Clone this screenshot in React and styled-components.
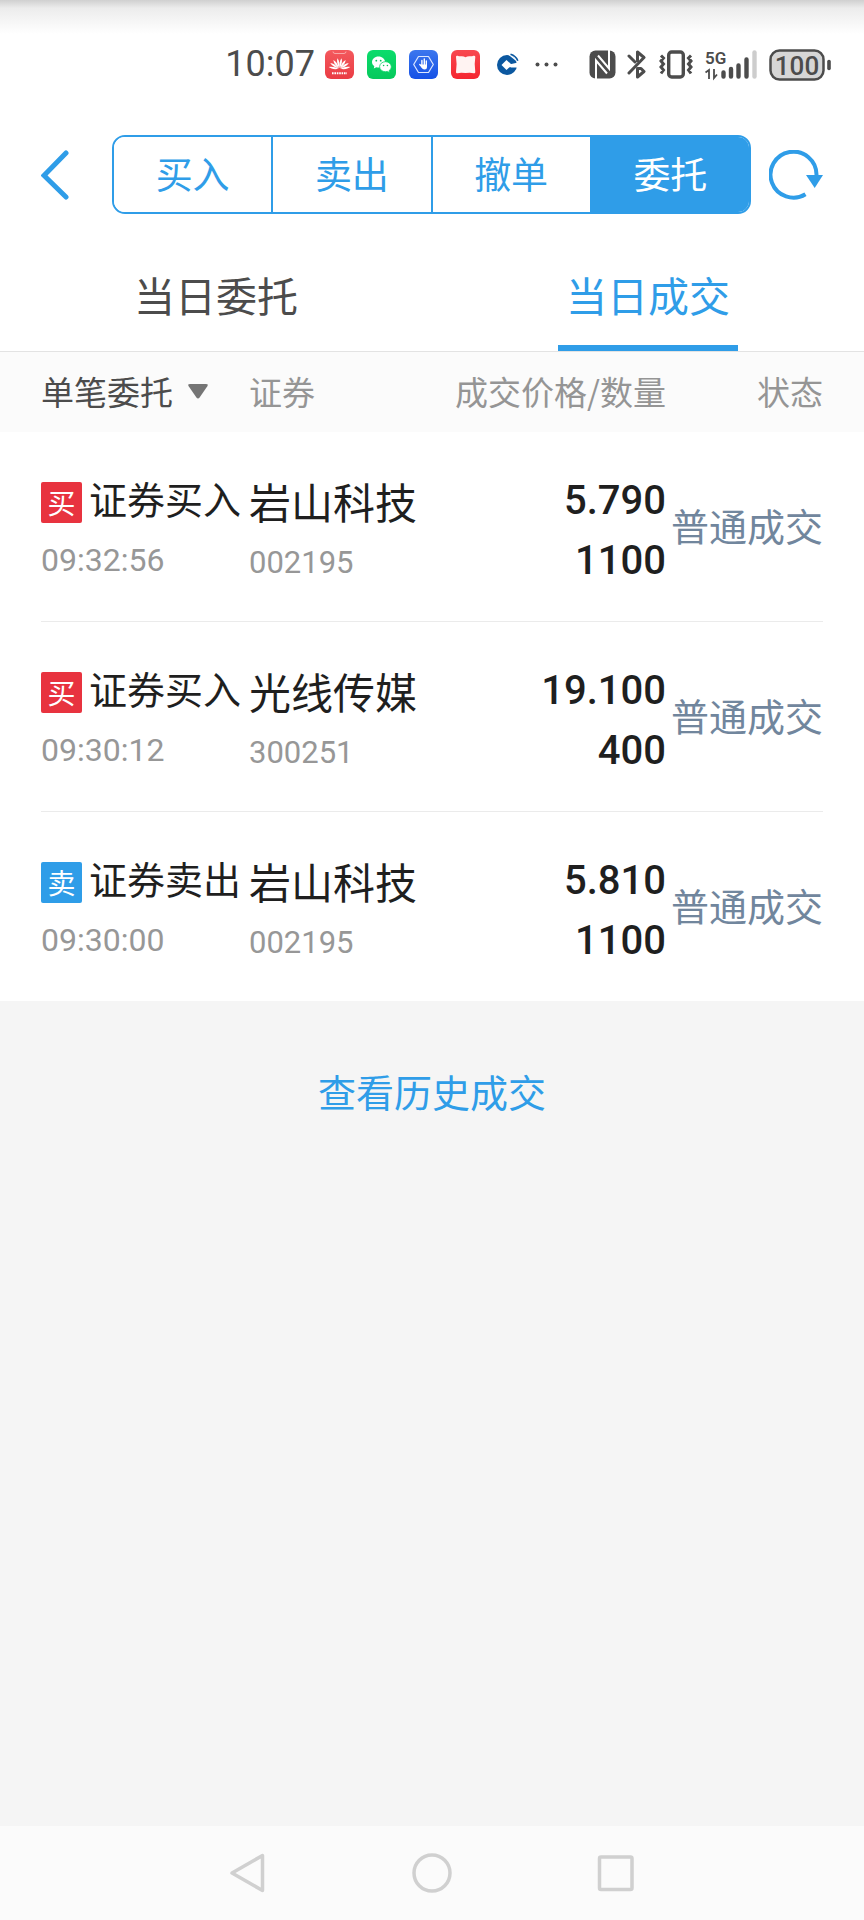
import React from "react";
import styled, { createGlobalStyle } from "styled-components";

const blue = "#2f9de8";
const ink = "#4c4c4c";
const cjk = '"Noto Sans CJK SC", sans-serif';
const digits = 'Roboto, "Noto Sans CJK SC", sans-serif';

const GlobalStyle = createGlobalStyle`
  *, *::before, *::after { box-sizing: border-box; }
  body { margin: 0; background: #f5f5f5; font-family: ${cjk}; color: #1f1f1f; }
  button, select { font: inherit; color: inherit; background: none; border: 0; padding: 0; margin: 0; cursor: pointer; }
  svg { display: block; flex: none; }
`;

const Screen = styled.div`
  display: flex;
  flex-direction: column;
  min-height: 100vh;
`;

const StatusBar = styled.header`
  display: flex;
  justify-content: flex-end;
  gap: 31px;
  height: 135px;
  padding: 46px 33px 0 16px;
  background: linear-gradient(#d0d0d0, #ececec 8px, #fff 34px);
  color: ${ink};
`;

const StatusGroup = styled.div`
  display: flex;
  align-items: center;
  height: 37px;
  gap: ${(p) => p.$gap}px;
`;

const Clock = styled.time`
  margin-right: -3px;
  font-family: ${digits};
  font-size: 36px;
  line-height: 37px;
`;

const Toolbar = styled.nav`
  display: flex;
  align-items: center;
  padding: 0 41px;
  background: #fff;
`;

const BackButton = styled.button`
  width: 71px;
  flex: none;
`;

const Segments = styled.div`
  display: flex;
  flex: 1;
  height: 79px;
  margin-right: 18px;
  border: 2px solid ${blue};
  border-radius: 13px;
  overflow: hidden;
`;

const Segment = styled.button`
  flex: 1;
  padding-bottom: 4px;
  font-size: 37px;
  line-height: 48px;
  color: ${(p) => (p.$active ? "#fff" : blue)};
  background: ${(p) => (p.$active ? blue : "#fff")};
  & + & { border-left: 2px solid ${blue}; }
`;

const Tabs = styled.div`
  display: flex;
  height: 138px;
  background: #fff;
  border-bottom: 1px solid #e3e3e3;
`;

const TabSlot = styled.div`
  flex: 1;
  display: flex;
  justify-content: center;
`;

const Tab = styled.button`
  width: 180px;
  padding-top: 28px;
  font-size: 41px;
  line-height: 56px;
  white-space: nowrap;
  color: ${(p) => (p.$active ? blue : ink)};
  border-bottom: 6px solid ${(p) => (p.$active ? blue : "transparent")};
`;

const Trades = styled.table`
  display: block;
  background: #fff;
`;

const Head = styled.thead`
  display: block;
  padding: 0 41px;
  background: #fbfbfb;
`;

const Body = styled.tbody`
  display: block;
  margin: 0 41px;
`;

const Row = styled.tr`
  display: grid;
  grid-template-columns: 208px minmax(0, 1fr) 215px 157px;
  white-space: nowrap;
`;

const HeadRow = styled(Row)`
  height: 80px;
  padding-bottom: 2px;
  align-items: center;
`;

const TradeRow = styled(Row)`
  height: 190px;
  align-items: center;
  border-bottom: 1px solid #ebebeb;
  &:last-child { height: 189px; border-bottom: 0; }
`;

const HeadCell = styled.th`
  padding: 0;
  font-size: 33px;
  line-height: 48px;
  font-weight: 400;
  color: #959595;
  text-align: ${(p) => p.$align || "left"};
`;

const Filter = styled.label`
  display: flex;
  align-items: center;
  gap: 14px;
  color: ${ink};
`;

const FilterSelect = styled.select`
  appearance: none;
  width: 132px;
  line-height: 48px;
`;

const Cell = styled.td`
  display: flex;
  flex-direction: column;
  gap: 2px;
  padding: 0;
`;

const OrderCell = styled(Cell)`
  padding-top: 5px;
`;

const StockCell = styled(Cell)`
  padding-top: 10px;
`;

const FigureCell = styled(Cell)`
  gap: 0;
  padding-top: 8px;
  text-align: right;
`;

const StateCell = styled(Cell)`
  padding-bottom: 4px;
  text-align: right;
  font-size: 38px;
  line-height: 60px;
  color: #71869d;
`;

const Side = styled.div`
  display: flex;
  align-items: center;
  gap: 7px;
  font-size: 38px;
  line-height: 60px;
`;

const Badge = styled.span`
  width: 41px;
  height: 41px;
  margin-top: 8px;
  border-radius: 2px;
  font-size: 28px;
  line-height: 41px;
  text-align: center;
  color: #fff;
  background: ${(p) => (p.$sell ? blue : "#e8333f")};
`;

const StockName = styled.div`
  font-size: 42px;
  line-height: 60px;
`;

const Time = styled.time`
  font-family: ${digits};
  font-size: 32px;
  line-height: 60px;
  color: #979797;
`;

const Code = styled.div`
  font-family: ${digits};
  font-size: 31px;
  line-height: 60px;
  color: #979797;
`;

const Figure = styled.div`
  font-family: ${digits};
  font-size: 40px;
  line-height: 60px;
  font-weight: 500;
`;

const More = styled.main`
  flex: 1;
  padding-top: 62px;
  text-align: center;
`;

const HistoryLink = styled.a`
  font-size: 38px;
  line-height: 56px;
  color: ${blue};
  text-decoration: none;
`;

const SystemNav = styled.footer`
  display: flex;
  align-items: center;
  justify-content: center;
  gap: 144px;
  height: 94px;
  background: #fbfbfb;
`;

const AppTile = ({ from, to, children }) => {
  const id = `tile${from.slice(1)}`;
  return (
    <svg width="29" height="29" viewBox="0 0 29 29" aria-hidden="true">
      <linearGradient id={id} x2="0" y2="1">
        <stop stopColor={from} />
        <stop offset="1" stopColor={to} />
      </linearGradient>
      <rect width="29" height="29" rx="6" fill={`url(#${id})`} />
      {children}
    </svg>
  );
};

const HuaweiIcon = () => (
  <AppTile from="#f4595d" to="#ea3c44">
    <path d="M8 1.500q0 2 2 2h9q2 0 2-2" fill="none" stroke="#f9a5a6" strokeWidth="1" />
    <g fill="#fff">
      {[-80, -57, -34, -11, 11, 34, 57, 80].map((a) => (
        <path key={a} d="M14.500 18C13 14 13.200 10.500 14.500 8C15.800 10.500 16 14 14.500 18Z" transform={`rotate(${a} 14.500 19)`} />
      ))}
    </g>
    <path d="M7 23.300h15" stroke="#fff" strokeWidth="2" strokeDasharray="1.600 .8" />
  </AppTile>
);

const WechatIcon = () => (
  <AppTile from="#0bdc6c" to="#06c95c">
    <path d="M11.500 6.500C7.700 6.500 5 9 5 12c0 1.800.9 3.200 2.300 4.200L6.800 18.500l2.500-1.300c.7.200 1.500.3 2.200.3 3.700 0 6.600-2.500 6.600-5.500s-2.900-5.500-6.600-5.500Z" fill="#fff" />
    <path d="M18.500 11.700c-3.300 0-5.900 2.200-5.900 5s2.600 5 5.900 5c.7 0 1.300-.1 1.900-.3l2.200 1.200-.5-2c1.400-.9 2.200-2.300 2.200-3.900 0-2.800-2.600-5-5.800-5Z" fill="#fff" stroke="#09d365" strokeWidth=".8" />
    <g fill="#09c35c"><circle cx="9.300" cy="10.700" r=".9" /><circle cx="13.700" cy="10.700" r=".9" /><circle cx="16.600" cy="15.500" r=".8" /><circle cx="20.400" cy="15.500" r=".8" /></g>
  </AppTile>
);

const GuardIcon = () => (
  <AppTile from="#3c77ee" to="#1551e6">
    <path d="M9.500 6.500h10l4.800 8-4.800 8h-10l-4.800-8Z" fill="none" stroke="#dce7ff" strokeWidth="1.200" strokeLinejoin="round" />
    <path d="M12.900 10.500v5M15.300 9v7M17.300 11v5M10.800 14.500l2.300 2.500" stroke="#fff" strokeWidth="1.400" strokeLinecap="round" />
    <path d="M12.200 14.500h5.800v2.500q0 2.500-2.600 2.500-1.800 0-3.200-2.500Z" fill="#fff" />
  </AppTile>
);

const ReaderIcon = () => (
  <AppTile from="#f8484f" to="#f52630">
    <path d="M5 7q0-1.600 1.600-1.200 1.400.6 3.500.5 2.500-.2 4.400.9 1.900-1.100 4.400-.9 2.100.1 3.500-.5Q24.300 5.400 24.300 7l-.6 7 .6 8q0 1.500-1.500 1.200-2.300-.6-8.300-.2-6-.4-8.100.2Q5 23.500 5 22l.6-8Z" fill="#fff3f2" />
  </AppTile>
);

const BankIcon = () => (
  <svg width="29" height="29" viewBox="0 0 29 29" aria-hidden="true">
    <circle cx="14" cy="15" r="10" fill="#0b58a0" />
    <path d="M14 15 25 12.500V17.500H18Z" fill="#fff" />
    <path d="M13.500 10 19 15l-5.500 5-5-5Z" fill="#fff" />
    <path d="M16 4.500 25.500 12" stroke="#fff" strokeWidth="1.200" />
    <path d="M17.500 4.300q5.500 1.700 7.300 6.500" fill="none" stroke="#0b58a0" strokeWidth="1.600" />
  </svg>
);

const MoreDots = () => (
  <svg width="23" height="29" viewBox="0 0 23 29" fill={ink} aria-hidden="true">
    <circle cx="2.500" cy="14.500" r="2" /><circle cx="11.500" cy="14.500" r="2" /><circle cx="20.500" cy="14.500" r="2" />
  </svg>
);

const NfcIcon = () => (
  <svg width="27" height="29" viewBox="0 0 27 29" aria-hidden="true">
    <rect x=".5" y=".5" width="26" height="28" rx="6" fill={ink} />
    <path d="M7 29V10.500L18 23.500" fill="none" stroke="#fff" strokeWidth="2" />
    <path d="M20 0V18.500L9 5.500" fill="none" stroke="#fff" strokeWidth="2" />
  </svg>
);

const BluetoothIcon = () => (
  <svg width="20" height="29" viewBox="0 0 20 29" fill="none" stroke={ink} strokeWidth="3" strokeLinejoin="round" strokeLinecap="round" aria-hidden="true">
    <path d="M2 23 17 7.500 10.500 2v8.500M2 6l6 6M10.500 18.500 14 18.500 17 21.500 10.500 27Z" />
  </svg>
);

const VibrateIcon = () => (
  <svg width="36" height="29" viewBox="0 0 36 29" fill="none" stroke={ink} aria-hidden="true">
    <rect x="10.700" y="2" width="14.600" height="25" rx="3" strokeWidth="3.400" />
    <path d="M3 5.500 5.500 8 3 11l2.500 3L3 17l2.500 3L3 23.500M33 5.500 30.500 8l2.500 3-2.500 3 2.500 3-2.500 3 2.500 3.500" strokeWidth="3" />
  </svg>
);

const SignalIcon = () => (
  <svg width="53" height="38" viewBox="0 -4 53 38" aria-hidden="true">
    <text x="0" y="14" fontFamily="Roboto, sans-serif" fontSize="17" fontWeight="600" fill={ink}>5G</text>
    <path d="M.5 22.500 4 20v9M9 19v9l3-3.500" fill="none" stroke={ink} strokeWidth="1.800" />
    <g stroke={ink} strokeWidth="4.400" strokeLinecap="round">
      <path d="M18.500 22.500V26.500M26 19V26.500M33.500 15.500V26.500M41.500 9.500V26.500" />
      <path d="M49.500 2.500V26.500" stroke="#cdcdcd" />
    </g>
  </svg>
);

const BatteryIcon = () => (
  <svg width="62" height="32" viewBox="0 0 62 32" role="img" aria-label="100%">
    <rect x="1.500" y="1.500" width="53" height="29" rx="9" fill="#d6d6d6" stroke={ink} strokeWidth="2.500" />
    <path d="M60 12.500v7" stroke={ink} strokeWidth="3.600" strokeLinecap="round" />
    <text x="28" y="25.500" textAnchor="middle" fontFamily="Roboto, sans-serif" fontSize="26" fontWeight="500" fill={ink}>100</text>
  </svg>
);

const BackIcon = () => (
  <svg width="28" height="50" viewBox="0 0 28 50" fill="none" aria-hidden="true">
    <path d="M25 3 3 25.500 25 47" stroke={blue} strokeWidth="5" strokeLinecap="round" />
  </svg>
);

const RefreshIcon = () => (
  <svg width="54" height="50" viewBox="0 0 54 50" aria-hidden="true">
    <path d="M36.500 44.300A23 23 0 1 1 47.500 25" fill="none" stroke={blue} strokeWidth="4" />
    <path d="M37 25h17L45.700 38Z" fill={blue} />
  </svg>
);

const Caret = () => (
  <svg width="22" height="17" viewBox="0 0 22 17" aria-hidden="true">
    <path d="M3 1h16q2.800 0 1.300 2.300L12.600 14.500q-1.600 2-3.200 0L1.700 3.300Q.2 1 3 1Z" fill="#757575" />
  </svg>
);

const segments = ["买入", "卖出", "撤单", "委托"];
const trades = [
  { side: "买", action: "证券买入", time: "09:32:56", name: "岩山科技", code: "002195", price: "5.790", amount: "1100" },
  { side: "买", action: "证券买入", time: "09:30:12", name: "光线传媒", code: "300251", price: "19.100", amount: "400" },
  { side: "卖", action: "证券卖出", time: "09:30:00", name: "岩山科技", code: "002195", price: "5.810", amount: "1100" },
];

export default function App() {
  return (
    <Screen>
      <GlobalStyle />
      <StatusBar>
        <StatusGroup $gap={13}>
          <Clock>10:07</Clock>
          <HuaweiIcon />
          <WechatIcon />
          <GuardIcon />
          <ReaderIcon />
          <BankIcon />
          <MoreDots />
        </StatusGroup>
        <StatusGroup $gap={11}>
          <NfcIcon />
          <BluetoothIcon />
          <VibrateIcon />
          <SignalIcon />
          <BatteryIcon />
        </StatusGroup>
      </StatusBar>
      <Toolbar>
        <BackButton aria-label="返回"><BackIcon /></BackButton>
        <Segments>
          {segments.map((s) => (
            <Segment key={s} $active={s === "委托"}>{s}</Segment>
          ))}
        </Segments>
        <button aria-label="刷新"><RefreshIcon /></button>
      </Toolbar>
      <Tabs>
        <TabSlot><Tab>当日委托</Tab></TabSlot>
        <TabSlot><Tab $active>当日成交</Tab></TabSlot>
      </Tabs>
      <Trades>
        <Head>
          <HeadRow>
            <HeadCell>
              <Filter>
                <FilterSelect aria-label="委托类型"><option>单笔委托</option></FilterSelect>
                <Caret />
              </Filter>
            </HeadCell>
            <HeadCell>证券</HeadCell>
            <HeadCell $align="right">成交价格/数量</HeadCell>
            <HeadCell $align="right">状态</HeadCell>
          </HeadRow>
        </Head>
        <Body>
          {trades.map((t) => (
            <TradeRow key={t.time}>
              <OrderCell>
                <Side><Badge $sell={t.side === "卖"}>{t.side}</Badge>{t.action}</Side>
                <Time>{t.time}</Time>
              </OrderCell>
              <StockCell>
                <StockName>{t.name}</StockName>
                <Code>{t.code}</Code>
              </StockCell>
              <FigureCell>
                <Figure>{t.price}</Figure>
                <Figure>{t.amount}</Figure>
              </FigureCell>
              <StateCell>普通成交</StateCell>
            </TradeRow>
          ))}
        </Body>
      </Trades>
      <More>
        <HistoryLink href="#history">查看历史成交</HistoryLink>
      </More>
      <SystemNav>
        <button aria-label="后退">
          <svg width="40" height="40" viewBox="0 0 40 40" fill="none" stroke="#d0d0d0" strokeWidth="3.500" strokeLinejoin="round"><path d="M34.500 2.500v35L4 20Z" /></svg>
        </button>
        <button aria-label="主屏幕">
          <svg width="40" height="40" viewBox="0 0 40 40" fill="none" stroke="#d0d0d0" strokeWidth="3.500"><circle cx="20" cy="20" r="18" /></svg>
        </button>
        <button aria-label="最近任务">
          <svg width="40" height="40" viewBox="0 0 40 40" fill="none" stroke="#d0d0d0" strokeWidth="3.500"><rect x="3.500" y="4" width="32.500" height="32.500" rx="1.500" /></svg>
        </button>
      </SystemNav>
    </Screen>
  );
}
